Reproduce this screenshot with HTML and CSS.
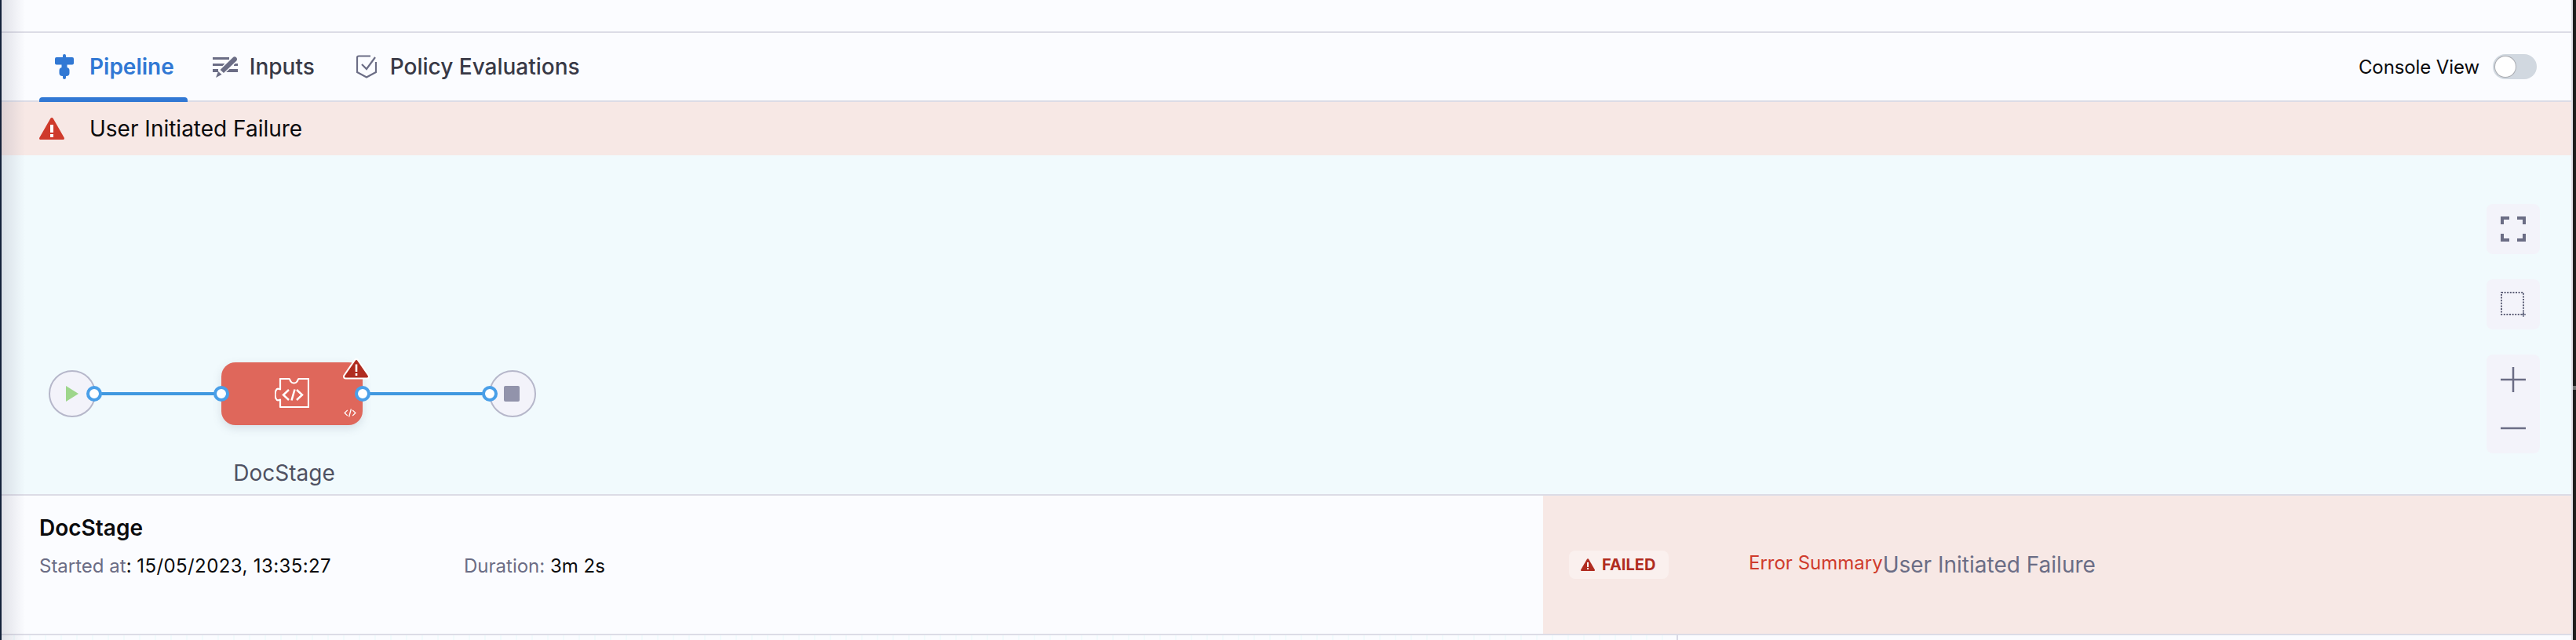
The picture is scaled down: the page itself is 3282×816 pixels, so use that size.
FILE: index.html
```html
<!DOCTYPE html>
<html lang="en">
<head>
<meta charset="utf-8">
<title>Pipeline execution</title>
<link rel="stylesheet" href="styles.css">
</head>
<body>
<div class="page">
  <div class="topbar"></div>
  <nav class="tabs">
    <div class="tab tab-active">
      <svg class="ic-pipeline" viewBox="0 0 24 32"><g fill="#3178d4"><rect x="10" y="0" width="4" height="6" rx="2"/><rect x="0" y="4" width="24" height="9.500" rx="2"/><rect x="8.500" y="13" width="7" height="5"/><rect x="5.500" y="17" width="13" height="11" rx="4"/><rect x="10" y="26" width="4" height="6" rx="2"/></g></svg>
      <span>Pipeline</span>
    </div>
    <div class="tab">
      <svg class="ic-inputs" viewBox="0 0 32 28"><g fill="#6b6d85"><path d="M0 2h21v3H0zM0 10h15v3H0zM27 10h5v3h-5zM0 17h7v4H0zM13 17h19v4H13z"/><path stroke="#fbfcff" stroke-width="1.500" d="M25 2c1.500-1.600 4-1.800 5.600-.3s1.500 4 0 5.500L14 23l-5.500-5z"/><path d="M7 20l4.500 4-7.500 4z"/></g></svg>
      <span>Inputs</span>
    </div>
    <div class="tab">
      <svg class="ic-policy" viewBox="0 0 26 30"><path fill="none" stroke="#6b6d85" stroke-width="2.200" d="M18 1.500H3c-1 0-2 1-2 2V22l12 6.500L25 22V9M7 12l6 6L24 3"/></svg>
      <span>Policy Evaluations</span>
    </div>
    <div class="console">
      <span>Console View</span>
      <div class="toggle"><div class="knob"></div></div>
    </div>
  </nav>
  <div class="banner">
    <svg class="ic-warn" viewBox="0 0 32 28"><path fill="#cf3a2b" d="M14.300 1c.8-1.300 2.600-1.300 3.400 0l14 24.500c.7 1.200-.1 2.500-1.500 2.500H1.800C.4 28-.4 26.700.3 25.500z"/><path fill="#fff" d="M14 9h4v10h-4zM14 21h4v4h-4z"/></svg>
    <span>User Initiated Failure</span>
  </div>
  <section class="canvas">
    <div class="graph">
      <div class="circle circle-start"><span class="play"></span></div>
      <span class="port port-a"></span>
      <span class="wire wire-a"></span>
      <div class="node">
        <svg class="ic-stage" viewBox="0 0 44 40"><path fill="none" stroke="#fff" stroke-width="2.200" stroke-linejoin="round" d="M7 1h11c1.500 0 1.500 2 2.500 3.500s2 2 4 2 3-.5 4-2 1-3.500 2.500-3.500h12v36H7V27.500c-1 0-2 .8-3 .8-2 0-3.500-3.300-3.500-7.300s1.500-7.300 3.500-7.300c1 0 2 .8 3 .8z"/><path fill="none" stroke="#fff" stroke-width="2.500" d="M18 15l-7 6.500 7 6.500M28 15l7 6.500-7 6.500M25.500 14.500l-4 14"/></svg>
        <svg class="ic-code" viewBox="0 0 17 12"><path fill="none" stroke="#fff" stroke-width="1.400" d="M5 2L1 6l4 4M12 2l4 4-4 4M10 .5L7 11.500"/></svg>
      </div>
      <svg class="ic-alert" viewBox="0 0 36 28"><path fill="#fff" stroke="#fff" stroke-width="7" stroke-linejoin="round" d="M18 4.500L31.500 24h-27z"/><path fill="#b02c20" stroke="#b02c20" stroke-width="3" stroke-linejoin="round" d="M18 4.500L31.500 24h-27z"/><path fill="#fff" d="M16.700 8.500h2.600v9.500h-2.600zM16.700 20h2.600v3h-2.600z"/></svg>
      <span class="port port-b"></span>
      <span class="port port-c"></span>
      <span class="wire wire-b"></span>
      <div class="circle circle-end"><span class="stop"></span></div>
      <span class="port port-d"></span>
      <span class="stage-label">DocStage</span>
    </div>
    <div class="controls">
      <button class="ctl"><svg class="ic-ctl" viewBox="0 0 32 32"><path fill="none" stroke="#6b6d85" stroke-width="4" d="M11 2H2v8M21 2h9v8M2 22v8h9M30 22v8h-9"/></svg></button>
      <button class="ctl"><svg class="ic-ctl" viewBox="0 0 32 32"><path fill="none" stroke="#5f6179" stroke-width="2" stroke-dasharray="2 1.600" d="M1 1h28v28H1z"/><path fill="none" stroke="#6b6d85" stroke-width="1.500" d="M29 26v6M26 29h6"/></svg></button>
      <div class="ctl ctl-zoom">
        <svg class="ic-ctl" viewBox="0 0 32 32"><path fill="none" stroke="#6b6d85" stroke-width="2.500" d="M16 0v32M0 16h32"/></svg>
        <svg class="ic-ctl" viewBox="0 0 32 32"><path fill="none" stroke="#6b6d85" stroke-width="2.500" d="M0 16h32"/></svg>
      </div>
    </div>
  </section>
  <section class="details">
    <div class="summary">
      <h2>DocStage</h2>
      <div class="meta">
        <div class="meta-start"><span class="muted">Started at</span>: <span class="date">15/05/2023, 13:35:27</span></div>
        <div><span class="muted">Duration:</span> 3m 2s</div>
      </div>
    </div>
    <div class="failure">
      <div class="badge">
        <svg class="ic-badge" viewBox="0 0 18 16"><path fill="#b02c20" d="M8 .8c.5-.8 1.500-.8 2 0l7.800 13.500c.4.800 0 1.700-1 1.700H1.200c-1 0-1.400-.9-1-1.700z"/><path fill="#fff" d="M8 5h2v6H8zM8 12h2v2H8z"/></svg>
        <span>FAILED</span>
      </div>
      <span class="err-title">Error Summary</span><span class="err-text">User Initiated Failure</span>
    </div>
  </section>
  <div class="bottom"><div class="bottom-left"></div></div>
  <div class="scroll-thumb"></div>
</div>
</body>
</html>
```

FILE: styles.css
```css
* { box-sizing: border-box; }
html, body { margin: 0; padding: 0; }
body { width: 3282px; height: 816px; overflow: hidden; background: #1e1e1e; font-family: Inter, "Liberation Sans", sans-serif; }
.page { position: relative; width: 3278px; height: 816px; border-left: 2px solid #14213a; border-right: 2px solid #e0dfe8; background: #fbfcff; display: flex; flex-direction: column; }
.page::after { content: ""; position: absolute; left: 0; top: 0; bottom: 0; width: 30px; background: linear-gradient(90deg, rgba(140,140,160,.24), rgba(140,140,160,0)); pointer-events: none; }
.scroll-thumb { position: absolute; left: 100%; margin-left: 2px; top: 492px; width: 4px; height: 5px; background: #777; }
.topbar { height: 40px; }
.tabs { height: 90px; border-top: 2px solid #dcdce6; border-bottom: 2px solid #dcdce6; display: flex; align-items: stretch; padding-left: 48px; padding-right: 44px; }
.tab { display: flex; align-items: center; padding: 0 20px; margin-right: 12px; font-size: 28px; font-weight: 500; color: #383946; position: relative; }
.tab-active { color: #3178d4; font-weight: 600; padding-right: 17px; }
.tab-active::after { content: ""; position: absolute; left: 0; right: 0; bottom: -2px; height: 6px; background: #3178d4; border-radius: 4px 4px 0 0; }
.ic-pipeline { width: 24px; height: 32px; margin-right: 20px; }
.ic-inputs { width: 32px; height: 28px; margin-right: 15px; }
.ic-policy { width: 26px; height: 30px; margin-left: 1px; margin-right: 17px; }
.console { margin-left: auto; display: flex; align-items: center; gap: 17px; font-size: 24px; letter-spacing: -.1px; color: #0b0b0d; }
.toggle { width: 56px; height: 32px; border-radius: 16px; background: #d1d8e0; padding: 3px; }
.knob { width: 26px; height: 26px; border-radius: 50%; background: #fff; box-shadow: 0 0 0 1px #a9abb0; }
.banner { height: 68px; background: #f7e8e5; display: flex; align-items: center; gap: 32px; padding-left: 48px; font-size: 28px; color: #0b0b0d; }
.ic-warn { width: 32px; height: 28px; }
.canvas { height: 434px; background: #f1fafd; border-bottom: 2px solid #dcdce6; position: relative; }
.graph { position: absolute; left: 0; top: 0; width: 700px; height: 432px; }
.circle { position: absolute; top: 274px; width: 60px; height: 60px; border-radius: 50%; background: #f3f3fa; border: 2px solid #b6b7ca; display: flex; align-items: center; justify-content: center; }
.circle-start { left: 60px; }
.circle-end { left: 621px; }
.play { width: 0; height: 0; border-left: 16px solid #9ed68b; border-top: 10px solid transparent; border-bottom: 10px solid transparent; }
.stop { width: 20px; height: 20px; background: #9293ab; border-radius: 2px; margin-left: -2px; }
.port { position: absolute; top: 294px; width: 20px; height: 20px; border-radius: 50%; background: #fff; border: 4px solid #4a9fe8; z-index: 2; }
.port-a { left: 108px; }
.port-b { left: 270px; }
.port-c { left: 450px; }
.port-d { left: 612px; }
.wire { position: absolute; top: 302px; height: 4px; background: #4098e0; }
.wire-a { left: 118px; width: 162px; }
.wire-b { left: 460px; width: 162px; }
.node { position: absolute; left: 280px; top: 264px; width: 180px; height: 80px; border-radius: 18px; background: #df675b; box-shadow: 0 4px 12px rgba(90,100,120,.18); }
.ic-stage { position: absolute; left: 68px; top: 20px; width: 44px; height: 40px; }
.ic-code { position: absolute; left: 156px; top: 59px; width: 16px; height: 11px; }
.ic-alert { position: absolute; left: 434px; top: 258px; width: 36px; height: 28px; z-index: 3; overflow: visible; }
.stage-label { position: absolute; left: 280px; width: 160px; top: 388px; text-align: center; font-size: 28px; line-height: 34px; color: #4f5162; }
.controls { position: absolute; right: 40px; top: 62px; display: flex; flex-direction: column; gap: 32px; width: 68px; }
.ctl { width: 68px; height: 64px; border: 0; padding: 0; background: #f3f3fa; border-radius: 8px; display: flex; align-items: center; justify-content: center; }
.ctl-zoom { height: 126px; flex-direction: column; gap: 30px; }
.ic-ctl { width: 32px; height: 32px; }
.details { height: 178px; display: flex; border-bottom: 2px solid #dcdce6; }
.summary { width: 1964px; padding: 24px 48px; }
.summary h2 { margin: 0; font-size: 28px; line-height: 34px; font-weight: 600; color: #0b0b0d; }
.meta { display: flex; margin-top: 16px; font-size: 24px; line-height: 32px; color: #0b0b0d; }
.meta-start { width: 541px; }
.date { letter-spacing: .4px; }
.muted { color: #6b6d85; }
.failure { flex: 1; background: #f7e8e5; display: flex; align-items: center; padding-left: 33px; }
.badge { width: 127px; height: 36px; border-radius: 8px; background: #faf0ee; display: flex; align-items: center; gap: 9px; padding-left: 15px; font-size: 20px; font-weight: 700; color: #b02c20; margin-right: 102px; }
.ic-badge { width: 18px; height: 16px; }
.err-title { font-size: 24px; font-weight: 400; color: #cf3b2c; margin-top: -6px; }
.err-text { font-size: 28px; color: #6b6d85; }
.bottom { flex: 1; }
.bottom-left { width: 2136px; height: 100%; border-right: 2px solid #d9d9e6; background: repeating-linear-gradient(90deg, #fbfcff 0 15px, #f2fbfd 15px 17px, #fbfcff 17px 20px); }
```
